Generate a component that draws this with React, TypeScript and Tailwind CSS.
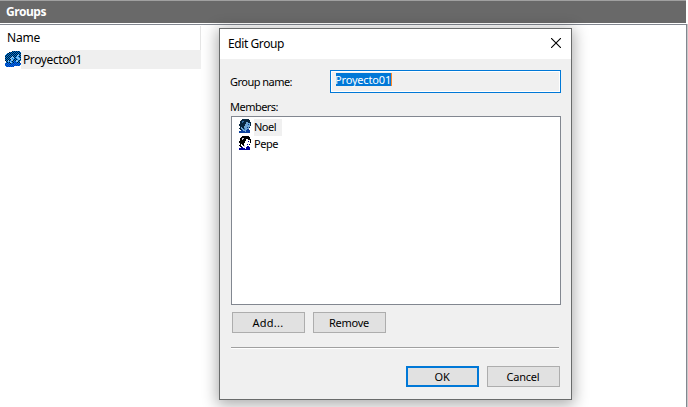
import React from "react";

const ui = "font-['Noto_Sans',sans-serif]";

function T({ children, w, className = "" }: { children: string; w: number; className?: string }) {
  const ref = React.useRef<HTMLSpanElement>(null);
  const [sp, setSp] = React.useState(0);
  React.useLayoutEffect(() => {
    if (ref.current) setSp((w - ref.current.getBoundingClientRect().width) / children.length);
  }, []);
  return (
    <span ref={ref} className={"inline-block whitespace-nowrap " + className} style={{ letterSpacing: sp }}>
      {children}
    </span>
  );
}

function UserIcon({ selected = false }: { selected?: boolean }) {
  const hair = selected ? "#06263f" : "#000000";
  const face = selected ? "#6fa8d6" : "#ffffff";
  const shade = selected ? "#2f6ea5" : "#c8c8d8";
  const body = selected ? "#0a3f9c" : "#000098";
  return (
    <svg className="block h-[14px] w-[12px] shrink-0" viewBox="0 0 12 14" shapeRendering="crispEdges">
      <path fill={hair} d="M3 0h7v1h1v2h1v4h-1v2h-1v2H7v1H4v-1H1v-1H0V9h1V7H0V5h1V2h1V1h1z" />
      <path fill={face} d="M7 3h2v1h2v4h-1v2h-1v1H6V9H5V7h1V5h1zM2 8h1v1h1v1h1v2H3v-2H2z" />
      <path fill={shade} d="M3 2h2v1H4v1H3zM5 9h1v2H5z" />
      <path fill={body} d="M0 12h2v-1h2v1h3v-1h1v-1h2v1h1v3H0zM9 5h1v1H9zM8 8h1v1H8z" />
      <path fill={face} d="M5 11h2v2H6v-1H5z" />
    </svg>
  );
}

function GroupIcon() {
  const outline =
    "M4 1h3v-1h8v1h1v9h-1v2h1v2h-1v1H9v1H1v-1H0v-3h1v-2H0V4h1V3h1V2h2z";
  return (
    <svg className="block h-[16px] w-[16px] shrink-0" viewBox="0 0 16 16" shapeRendering="crispEdges">
      <defs>
        <pattern id="dither" width="2" height="2" patternUnits="userSpaceOnUse">
          <path fill="#0078d7" d="M0 0h1v1H0zM1 1h1v1H1z" />
        </pattern>
      </defs>
      <path fill="#001c38" d={outline} />
      <path fill="#0030c0" d="M0 12h4v1h3v-1h2v-2h2v2h5v2h-1v1H9v1H1v-1H0z" />
      <path fill="url(#dither)" d={outline} />
      <path fill="#7fc0f2" d="M7 5h1v1h1v2H8v2H7v2H5v-2h1V8H5V7h1V6h1zM13 3h1v4h1v2h-2v2h-2V9h1V7h-1V6h1V4h1zM3 9h1v2H3z" />
      <path fill="#0078d7" d="M7 7h1v1H7zM13 5h1v1h-1zM6 10h1v1H6zM12 8h1v1h-1z" />
    </svg>
  );
}

function Button({ label, w, primary = false }: { label: string; w: number; primary?: boolean }) {
  return (
    <button
      className={
        "flex h-[21px] w-[73px] items-center justify-center bg-[#e1e1e1] pr-px text-[11px] leading-[17px] " +
        (primary ? "border-2 border-[#0078d7]" : "border border-[#adadad]")
      }
    >
      <T w={w}>{label}</T>
    </button>
  );
}

export default function App() {
  return (
    <div className={"relative flex h-[407px] w-[688px] flex-col overflow-hidden bg-white text-black " + ui}>
      <header className="mr-[2px] h-[23px] shrink-0 border-t border-[#a0a0a0] bg-[#696969] pl-[6px] text-[12px] leading-[22px] font-bold text-white">
        <T w={40}>Groups</T>
      </header>
      <main className="mt-px mr-px flex-1 border-t border-r border-[#828790] pt-px shadow-[1px_0_0_#c8c8c8]">
        <div className="h-[24px] w-[201px] border-r border-[#e5e5e5] pl-[7px] text-[12px] leading-[23px]">
          <T w={33}>Name</T>
        </div>
        <div className="flex h-[19px] w-[201px] pl-[5px]">
          <div className="pt-px"><GroupIcon /></div>
          <div className="flex-1 bg-[#efefef] pl-[2px] text-[12px] leading-[19px]">
            <T w={59}>Proyecto01</T>
          </div>
        </div>
      </main>

      <section className="absolute top-[28px] left-[219px] flex h-[372px] w-[353px] flex-col border border-[#696b6b] bg-[#f0f0f0] shadow-[0_3px_14px_2px_rgba(0,0,0,0.32)]">
        <div className="flex h-[30px] shrink-0 items-center justify-between bg-white pr-[10px] pl-[8px] text-[12px] leading-[30px]">
          <T w={56}>Edit Group</T>
          <svg className="mb-[2px] h-[10px] w-[10px]" viewBox="0 0 10 10" stroke="#000" strokeWidth="1.1">
            <path d="M0 0l10 10M10 0L0 10" />
          </svg>
        </div>
        <div className="flex flex-1 flex-col pt-[11px] pr-[10px] pl-[11px] text-[11px]">
          <div className="flex h-[23px]">
            <div className="-ml-px w-[100px] leading-[23px]"><T w={62}>Group name:</T></div>
            <div className="h-[23px] w-[231px] border border-[#0078d7] bg-white p-px">
              <div className="h-[19px] bg-[#f0f0f0] pt-px pl-[4px]">
                <div className="h-[13px] w-[56px] border-r border-[#ff8728] bg-[#0078d7] leading-[13px] text-white">
                  <T w={56} className="-ml-px align-top">Proyecto01</T>
                </div>
              </div>
            </div>
          </div>
          <div className="-ml-px mt-[6px] h-[17px] leading-[16px]"><T w={48}>Members:</T></div>
          <div className="h-[189px] w-[330px] border border-[#828790] bg-white pt-[2px] pl-[7px]">
            <div className="flex h-[17px] gap-px">
              <UserIcon selected />
              <div className="ml-[2px] h-[17px] w-[28px] bg-[#f0f0f0] leading-[15px]"><T w={22} className="align-top">Noel</T></div>
            </div>
            <div className="flex h-[17px] gap-[3px]">
              <UserIcon />
              <div className="leading-[15px]"><T w={24} className="align-top">Pepe</T></div>
            </div>
          </div>
          <div className="mt-[7px] ml-px flex gap-[8px]">
            <Button label="Add..." w={31} />
            <Button label="Remove" w={40} />
          </div>
          <div className="mt-[14px] h-[2px] w-[328px] border-t border-[#a0a0a0] bg-white" />
          <div className="mt-[17px] ml-[175px] flex gap-[8px]">
            <Button label="OK" w={15} primary />
            <Button label="Cancel" w={33} />
          </div>
        </div>
      </section>
    </div>
  );
}
